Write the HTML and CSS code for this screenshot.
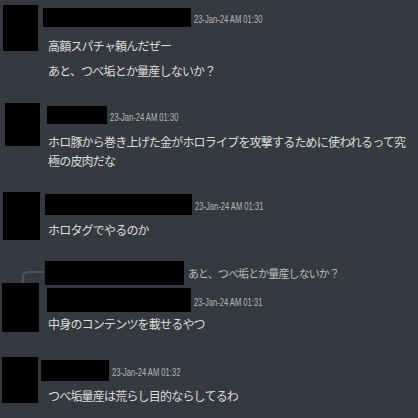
FILE: index.html
```html
<!DOCTYPE html>
<html lang="ja">
<head>
    <meta charset="UTF-8">
    <meta name="viewport" content="width=device-width, initial-scale=1.0">
    <title>Chat log</title>
    <link rel="stylesheet" href="styles.css">
</head>
<body>
    <div class="chat">
        <div class="msg msg-1">
            <div class="avatar-col"><div class="avatar av-1"></div></div>
            <div class="body">
                <div class="head">
                    <div class="name name-1"></div>
                    <span class="time">23-Jan-24 AM 01:30</span>
                </div>
                <p class="text first">高額スパチャ頼んだぜー</p>
                <p class="text next">あと、つべ垢とか量産しないか？</p>
            </div>
        </div>

        <div class="msg msg-2">
            <div class="avatar-col"><div class="avatar av-2"></div></div>
            <div class="body">
                <div class="head">
                    <div class="name name-2"></div>
                    <span class="time">23-Jan-24 AM 01:30</span>
                </div>
                <p class="text first">ホロ豚から巻き上げた金がホロライブを攻撃するために使われるって究極の皮肉だな</p>
            </div>
        </div>

        <div class="msg msg-3">
            <div class="avatar-col"><div class="avatar av-3"></div></div>
            <div class="body">
                <div class="head">
                    <div class="name name-3"></div>
                    <span class="time">23-Jan-24 AM 01:31</span>
                </div>
                <p class="text first">ホロタグでやるのか</p>
            </div>
        </div>

        <div class="reply">
            <div class="spine"></div>
            <div class="name name-r"></div>
            <span class="reply-text">あと、つべ垢とか量産しないか？</span>
        </div>

        <div class="msg msg-4">
            <div class="avatar-col"><div class="avatar av-4"></div></div>
            <div class="body">
                <div class="head">
                    <div class="name name-4"></div>
                    <span class="time">23-Jan-24 AM 01:31</span>
                </div>
                <p class="text">中身のコンテンツを載せるやつ</p>
            </div>
        </div>

        <div class="msg msg-5">
            <div class="avatar-col"><div class="avatar av-5"></div></div>
            <div class="body">
                <div class="head">
                    <div class="name name-5"></div>
                    <span class="time">23-Jan-24 AM 01:32</span>
                </div>
                <p class="text first">つべ垢量産は荒らし目的ならしてるわ</p>
            </div>
        </div>
    </div>
</body>
</html>
```

FILE: styles.css
```css
* {
    margin: 0;
    padding: 0;
    box-sizing: border-box;
}

body {
    background-color: #36393f;
    color: #dcddde;
    font-family: "Noto Sans CJK JP", "Noto Sans", sans-serif;
    width: 418px;
    height: 418px;
    overflow: hidden;
}

.chat {
    display: flex;
    flex-direction: column;
}

.msg {
    display: flex;
}

.avatar-col {
    width: 45px;
    flex-shrink: 0;
}

.avatar {
    background-color: #000;
}

.body {
    flex: 1;
    min-width: 0;
    padding-right: 4px;
}

.head {
    display: flex;
    align-items: center;
}

.name {
    background-color: #000;
}

.time {
    display: inline-block;
    font-family: "Liberation Sans", Arial, sans-serif;
    font-size: 11px;
    color: #b4b6ba;
    margin-left: 3px;
    padding-top: 3px;
    transform: scaleX(0.69);
    transform-origin: left center;
    white-space: nowrap;
}

.text {
    font-size: 12px;
    line-height: 19px;
    padding-left: 3px;
    letter-spacing: -0.8px;
}

.text.next {
    margin-top: 6px;
}

/* message 1 */
.msg-1 {
    margin-top: 5px;
}

.av-1 {
    width: 35px;
    height: 46px;
    margin-left: 3px;
}

.msg-1 .body {
    padding-top: 3px;
}

.name-1 {
    width: 148px;
    height: 19px;
    margin-left: -2px;
}

.msg-1 .text.first {
    margin-top: 9px;
}

/* message 2 */
.msg-2 {
    margin-top: 23px;
}

.av-2 {
    width: 35px;
    height: 43px;
    margin-left: 5px;
}

.msg-2 .body {
    padding-top: 3px;
}

.name-2 {
    width: 60px;
    height: 18px;
    margin-left: 2px;
}

.msg-2 .text.first {
    margin-top: 8px;
}

/* message 3 */
.msg-3 {
    margin-top: 22px;
}

.av-3 {
    width: 37px;
    height: 48px;
    margin-left: 3px;
}

.msg-3 .body {
    padding-top: 2px;
}

.name-3 {
    width: 147px;
    height: 21px;
}

.msg-3 .text.first {
    margin-top: 5px;
}

/* reply preview */
.reply {
    display: flex;
    align-items: center;
    margin-top: 21px;
    height: 24px;
}

.spine {
    align-self: flex-start;
    width: 22px;
    height: 12px;
    margin: 10px 1px 0 22px;
    border-top: 2px solid #4f545c;
    border-left: 2px solid #4f545c;
    border-top-left-radius: 6px;
}

.name-r {
    width: 139px;
    height: 24px;
}

.reply-text {
    font-size: 11px;
    color: #b9bbbe;
    margin-left: 4px;
    letter-spacing: -0.9px;
}

/* message 4 */
.msg-4 {
    margin-top: -2px;
}

.av-4 {
    width: 37px;
    height: 49px;
    margin-left: 2px;
}

.msg-4 .body {
    padding-top: 5px;
}

.name-4 {
    width: 144px;
    height: 24px;
    margin-left: 2px;
}

.msg-4 .text {
    margin-top: 2px;
}

/* message 5 */
.msg-5 {
    margin-top: 24px;
}

.av-5 {
    width: 36px;
    height: 46px;
    margin-left: 2px;
}

.msg-5 .body {
    padding-top: 3px;
}

.name-5 {
    width: 68px;
    height: 21px;
    margin-left: -4px;
}

.msg-5 .text.first {
    margin-top: 5px;
}
```
